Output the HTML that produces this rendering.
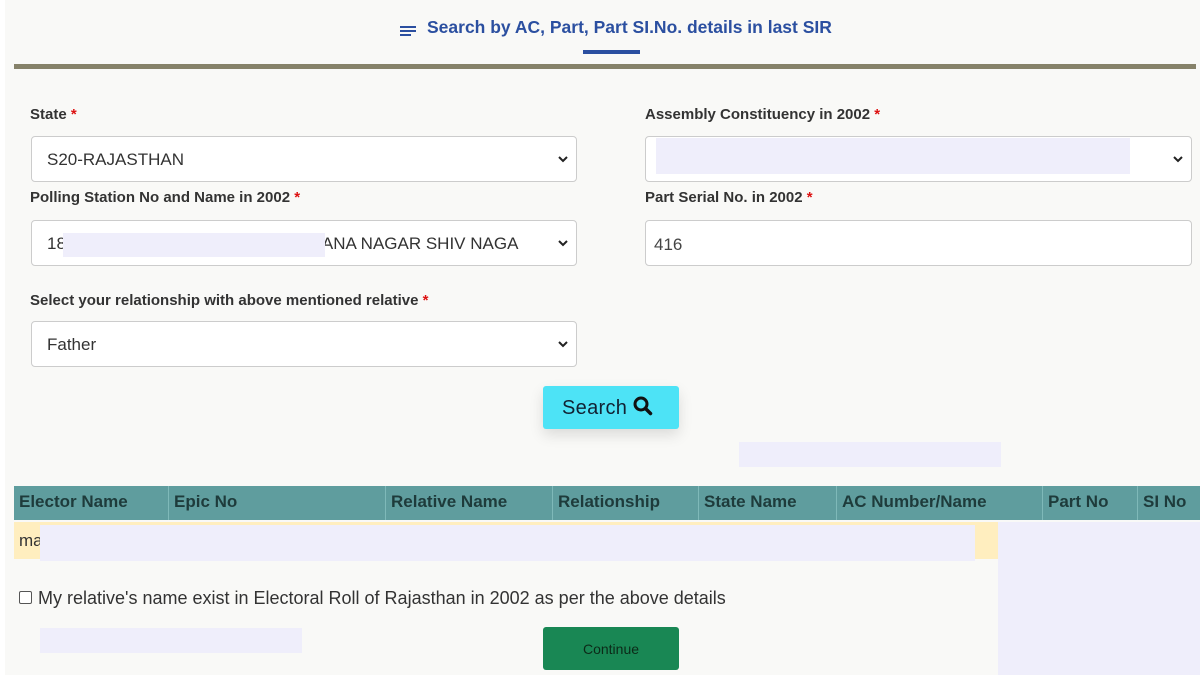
<!DOCTYPE html>
<html><head><style>
*{margin:0;padding:0;box-sizing:border-box}
body{width:1200px;height:675px;background:#f9f9f7;font-family:"Liberation Sans",sans-serif;position:relative;overflow:hidden;color:#222}
.a{position:absolute;white-space:nowrap}
.lbl{font-size:15px;font-weight:bold;letter-spacing:0;color:#333}
.lbl b{color:#d11;}
.sel{position:absolute;background:#fff;border:1px solid #ccc;border-radius:4px;height:46px}
.sel span{position:absolute;left:15px;top:13px;font-size:17px;letter-spacing:0;color:#333}
.chev{position:absolute;right:8px;top:17px;width:10px;height:10px}
.lav{position:absolute;background:#efeefb}
.th{position:absolute;top:486px;height:34px;font-size:17px;font-weight:bold;letter-spacing:0;color:#1e3b3b;padding:6px 5px;border-right:1px solid #7fb9b9}
</style></head><body>
<div class="a" style="left:0;top:0;width:5px;height:675px;background:#fff"></div>
<svg class="a" style="left:399px;top:23px" width="18" height="14" viewBox="0 0 18 14"><path d="M1 4h16M1 8h16M1 12h11" stroke="#2b4fa0" stroke-width="2"/></svg>
<div class="a" style="left:427px;top:17px;font-size:17.5px;font-weight:bold;color:#2b4fa0;letter-spacing:0">Search by AC, Part, Part SI.No. details in last SIR</div>
<div class="a" style="left:583px;top:50px;width:57px;height:4px;background:#2b4fa0"></div>
<div class="a" style="left:14px;top:64px;width:1182px;height:5px;background:#86826a"></div>

<div class="a lbl" style="left:30px;top:106px">State <b>*</b></div>
<div class="a lbl" style="left:645px;top:106px">Assembly Constituency in 2002 <b>*</b></div>
<div class="sel" style="left:31px;top:136px;width:546px"><span>S20-RAJASTHAN</span><svg class="chev" viewBox="0 0 10 10"><path d="M1 3l4 4 4-4" stroke="#222" stroke-width="2" fill="none"/></svg></div>
<div class="sel" style="left:645px;top:136px;width:547px"><svg class="chev" viewBox="0 0 10 10"><path d="M1 3l4 4 4-4" stroke="#222" stroke-width="2" fill="none"/></svg></div>
<div class="lav" style="left:656px;top:138px;width:474px;height:36px"></div>

<div class="a lbl" style="left:30px;top:189px">Polling Station No and Name in 2002 <b>*</b></div>
<div class="a lbl" style="left:645px;top:189px">Part Serial No. in 2002 <b>*</b></div>
<div class="sel" style="left:31px;top:220px;width:546px"><span>18<span style="position:static;display:inline-block;width:256px"></span>ANA NAGAR SHIV NAGA</span><svg class="chev" viewBox="0 0 10 10"><path d="M1 3l4 4 4-4" stroke="#222" stroke-width="2" fill="none"/></svg></div>
<div class="lav" style="left:63px;top:233px;width:262px;height:24px"></div>
<div class="sel" style="left:645px;top:220px;width:547px"><span style="left:8px;top:14px;color:#444">416</span></div>

<div class="a lbl" style="left:30px;top:292px">Select your relationship with above mentioned relative <b>*</b></div>
<div class="sel" style="left:31px;top:321px;width:546px"><span>Father</span><svg class="chev" viewBox="0 0 10 10"><path d="M1 3l4 4 4-4" stroke="#222" stroke-width="2" fill="none"/></svg></div>

<div class="a" style="left:543px;top:386px;width:136px;height:43px;background:#4de3f6;border-radius:3px;box-shadow:0 6px 14px rgba(0,0,0,0.12);font-size:20px;color:#123;padding:10px 0 0 19px;letter-spacing:0.3px">Search <svg width="20" height="20" viewBox="0 0 20 20" style="vertical-align:-2px"><circle cx="8" cy="8" r="6" stroke="#111" stroke-width="3" fill="none"/><path d="M12.5 12.5l5 5" stroke="#111" stroke-width="3.5" stroke-linecap="round"/></svg></div>

<div class="lav" style="left:739px;top:442px;width:262px;height:25px"></div>

<div class="a" style="left:14px;top:486px;width:1186px;height:34px;background:#5f9d9e"></div>
<div class="th" style="left:14px;width:155px">Elector Name</div>
<div class="th" style="left:169px;width:217px">Epic No</div>
<div class="th" style="left:386px;width:167px">Relative Name</div>
<div class="th" style="left:553px;width:146px">Relationship</div>
<div class="th" style="left:699px;width:138px">State Name</div>
<div class="th" style="left:837px;width:206px">AC Number/Name</div>
<div class="th" style="left:1043px;width:95px">Part No</div>
<div class="th" style="left:1138px;width:62px;border:0">SI No</div>

<div class="a" style="left:14px;top:522px;width:984px;height:37px;background:#ffeebf"></div>
<div class="a" style="left:19px;top:531px;font-size:17px;color:#333">ma</div>
<div class="lav" style="left:40px;top:525px;width:935px;height:36px"></div>
<div class="lav" style="left:998px;top:522px;width:202px;height:153px"></div>

<div class="a" style="left:19px;top:591px;width:13px;height:13px;border:1px solid #555;border-radius:2px;background:#fff"></div>
<div class="a" style="left:38px;top:588px;font-size:18px;color:#333;letter-spacing:0">My relative's name exist in Electoral Roll of Rajasthan in 2002 as per the above details</div>

<div class="lav" style="left:40px;top:628px;width:262px;height:25px"></div>
<div class="a" style="left:543px;top:627px;width:136px;height:43px;background:#198754;border-radius:3px;font-size:14px;color:#0c2a18;text-align:center;padding-top:14px">Continue</div>
</body></html>
